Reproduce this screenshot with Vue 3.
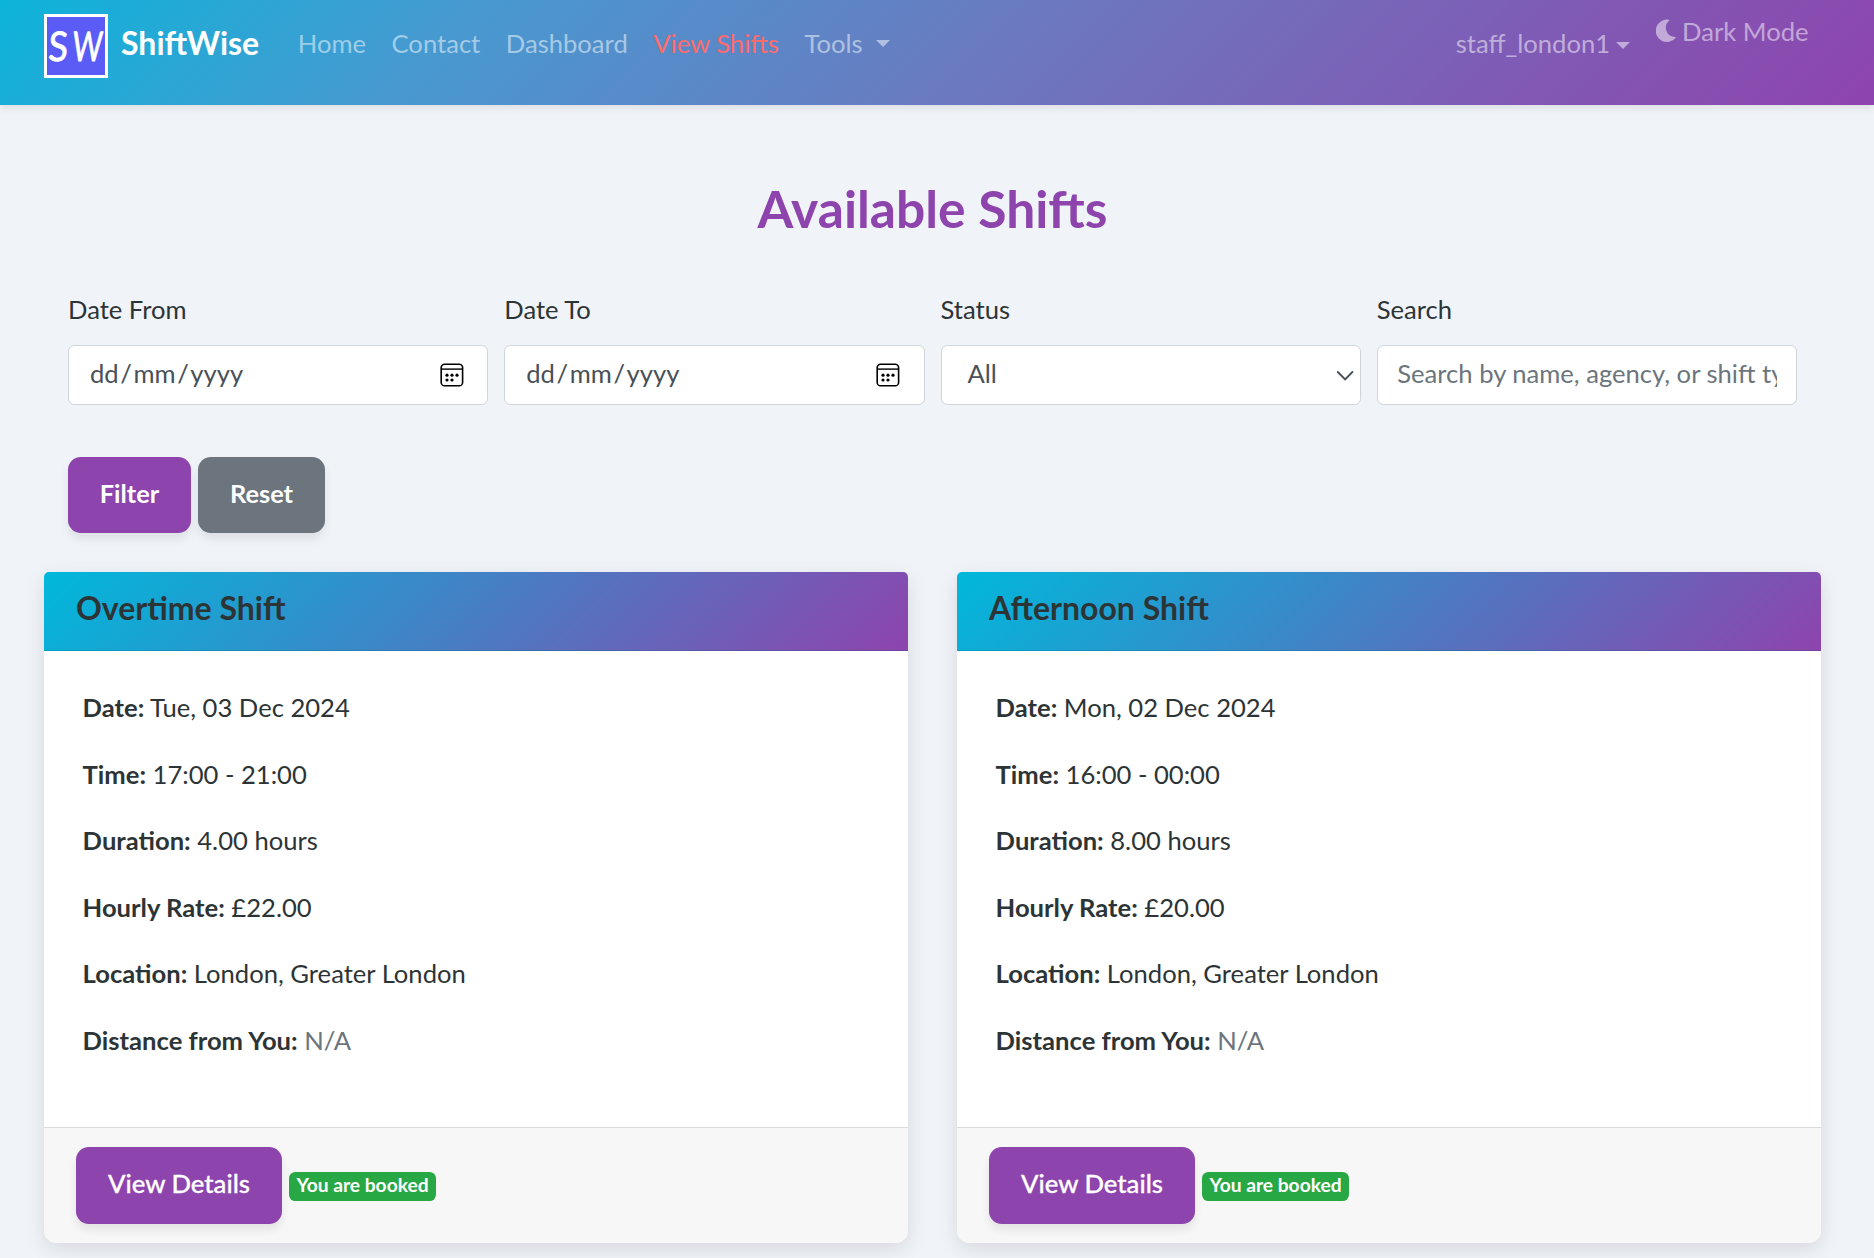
<script setup>
const links = [
  { label: 'Home' },
  { label: 'Contact' },
  { label: 'Dashboard' },
  { label: 'View Shifts', active: true },
  { label: 'Tools', caret: true },
]

const shifts = [
  {
    title: 'Overtime Shift',
    rows: [
      ['Date:', 'Tue, 03 Dec 2024'],
      ['Time:', '17:00 - 21:00'],
      ['Duration:', '4.00 hours'],
      ['Hourly Rate:', '£22.00'],
      ['Location:', 'London, Greater London'],
      ['Distance from You:', 'N/A', true],
    ],
  },
  {
    title: 'Afternoon Shift',
    rows: [
      ['Date:', 'Mon, 02 Dec 2024'],
      ['Time:', '16:00 - 00:00'],
      ['Duration:', '8.00 hours'],
      ['Hourly Rate:', '£20.00'],
      ['Location:', 'London, Greater London'],
      ['Distance from You:', 'N/A', true],
    ],
  },
]
</script>

<template>
  <div class="page">
    <nav class="navbar">
      <svg class="logo" width="64" height="64" viewBox="0 0 64 64">
        <rect width="64" height="64" fill="#fff" />
        <rect x="3" y="3" width="58" height="58" fill="#5b5bf6" />
        <g fill="#fff" stroke="#fff" stroke-width="0.8" stroke-linejoin="round" font-family="Lato, sans-serif" font-size="41">
          <text transform="translate(3.8 47.2) skewX(-3) scale(.88 1)">S</text>
          <text transform="translate(27.6 47.2) skewX(-4) scale(.71 1)">W</text>
        </g>
      </svg>
      <span class="brand">ShiftWise</span>
      <ul class="links">
        <li v-for="l in links" :key="l.label" :class="{ active: l.active }">
          {{ l.label }}<i v-if="l.caret" class="caret"></i>
        </li>
      </ul>
      <div class="user">staff_london1<i class="caret"></i></div>
      <div class="mode">
        <svg width="20" height="24" viewBox="0 0 20 24">
          <path d="M12.8 .8A11.2 11.2 0 1 0 19.7 18.7c.4-.4 0-.9-.5-.8A9.3 9.3 0 0 1 12.9 1.7c.5-.3.4-.9-.1-.9z" fill="currentColor" />
        </svg>
        <span>Dark Mode</span>
      </div>
    </nav>

    <main>
      <h2>Available Shifts</h2>

      <form class="filters" @submit.prevent>
        <div v-for="name in ['Date From', 'Date To']" :key="name" class="field">
          <label>{{ name }}</label>
          <div class="control date">
            <span>dd</span><span class="slash">/</span><span>mm</span><span class="slash">/</span><span>yyyy</span>
            <svg class="calendar" width="24" height="24" viewBox="0 0 24 24">
              <rect x="1.2" y="1.2" width="21.4" height="21.6" rx="3.4" fill="none" stroke="#000" stroke-width="1.6" />
              <path d="M1 6.1h22" stroke="#000" stroke-width="1.4" />
              <g fill="#000">
                <circle cx="7" cy="12.2" r="1.6" /><circle cx="12" cy="12.2" r="1.6" /><circle cx="17" cy="12.2" r="1.6" />
                <circle cx="7" cy="17" r="1.6" /><circle cx="12" cy="17" r="1.6" />
              </g>
            </svg>
          </div>
        </div>
        <div class="field">
          <label>Status</label>
          <div class="control select">
            <span>All</span>
            <svg width="18" height="12" viewBox="0 0 18 12">
              <path d="M1.8 2l7.3 7.3L16.4 2" fill="none" stroke="#495057" stroke-width="1.9" stroke-linecap="round" />
            </svg>
          </div>
        </div>
        <div class="field">
          <label>Search</label>
          <input class="control search" type="text" placeholder="Search by name, agency, or shift type" />
        </div>
      </form>

      <div class="actions">
        <button class="btn filter">Filter</button>
        <button class="btn reset">Reset</button>
      </div>

      <section class="cards">
        <article v-for="s in shifts" :key="s.title" class="card">
          <header>{{ s.title }}</header>
          <div class="body">
            <p v-for="r in s.rows" :key="r[0]">
              <strong>{{ r[0] }}</strong> <span :class="{ muted: r[2] }">{{ r[1] }}</span>
            </p>
          </div>
          <footer>
            <button class="btn details">View Details</button>
            <span class="badge">You are booked</span>
          </footer>
        </article>
      </section>
    </main>
  </div>
</template>

<style>
body {
  margin: 0;
  background: #f0f3f8;
}
</style>

<style scoped>
* {
  box-sizing: border-box;
}
.page {
  height: 1258px;
  overflow: hidden;
  background: #f0f3f8;
  color: #2d3436;
  font-family: Lato, sans-serif;
  font-size: 25.6px;
  line-height: 41px;
}
.navbar {
  height: 105px;
  padding: 14px 65.5px 0 44px;
  display: flex;
  align-items: flex-start;
  background: linear-gradient(135deg, #0cb4da, #4899d0 24.5%, #6c78bf 54%, #8e44ad);
  box-shadow: 0 3px 8px rgba(0, 0, 0, 0.09);
  color: rgba(255, 255, 255, 0.5);
  white-space: nowrap;
}
.logo {
  flex: none;
}
.brand {
  margin: 8px 0 0 13px;
  width: 164px;
  color: #fff;
  font-size: 32px;
  font-weight: 700;
}
.links {
  display: flex;
  gap: 25.5px;
  margin: 8.5px 0 0 12.8px;
  padding: 0;
  list-style: none;
}
.active {
  color: #ff6b6b;
}
.caret {
  display: inline-block;
  margin-left: 13.5px;
  vertical-align: 6px;
  border: 7px solid transparent;
  border-top-color: currentColor;
  border-bottom: 0;
}
.user {
  margin: 8.5px 0 0 auto;
}
.user .caret {
  margin-left: 6.4px;
  vertical-align: 4px;
}
.mode {
  display: flex;
  margin: -3.5px 0 0 25.6px;
}
.mode svg {
  margin: 8px 6px 0 0;
}
main {
  padding: 0 53px 0 44px;
}
h2 {
  margin: 0;
  padding-top: 72px;
  height: 184px;
  text-align: center;
  color: #8e44ad;
  font-size: 51.6px;
  line-height: 62px;
  font-weight: 700;
}
.filters {
  display: grid;
  grid-template-columns: repeat(4, 1fr);
  gap: 16px;
  padding: 0 24px;
}
.field label {
  display: block;
  height: 56px;
}
.control {
  display: flex;
  width: 100%;
  height: 60px;
  border: 1px solid #ced4da;
  border-radius: 6.4px;
  background: #fff;
  color: #495057;
  padding: 7px 21px;
}
.slash {
  margin: 0 1.6px;
}
.calendar {
  margin: 10px 2.4px 0 auto;
}
.select {
  padding: 7px 6px 7px 26px;
}
.select svg {
  margin: 17px 0 0 auto;
}
.search {
  font: inherit;
  padding: 0 19px 4px 19.5px;
}
.search::placeholder {
  color: #6c757d;
  opacity: 1;
}
.actions {
  display: flex;
  gap: 7px;
  padding: 52px 24px 0;
  height: 167px;
}
.btn {
  height: 76px;
  padding: 0 0 4px;
  border: 0;
  border-radius: 12.8px;
  background: #8e44ad;
  color: #fff;
  font: 700 25.4px/41px Lato, sans-serif;
  box-shadow: 0 6px 10px rgba(0, 0, 0, 0.08);
}
.filter {
  width: 123px;
}
.reset {
  width: 127px;
  background: #6c757d;
}
.cards {
  display: grid;
  grid-template-columns: 1fr 1fr;
  gap: 49px;
}
.card {
  height: 671px;
  display: flex;
  flex-direction: column;
  background: #fff;
  border-radius: 5px 5px 12.8px 12.8px;
  box-shadow: 0 6px 20px rgba(0, 0, 0, 0.11);
}
header {
  height: 79px;
  padding: 17px 32px 0;
  border-bottom: 1px solid rgba(0, 0, 0, 0.125);
  border-radius: 5px 5px 0 0;
  background: linear-gradient(135deg, #00b8db, #8e44ad);
  font-size: 32px;
  line-height: 38px;
  font-weight: 700;
}
.body {
  flex: 1;
  padding: 36px 38.6px 0;
}
.body p {
  margin: 0 0 25.6px;
}
.muted {
  color: #6c757d;
}
footer {
  display: flex;
  height: 116px;
  padding: 19px 32px 0;
  border-top: 1px solid #d9dadb;
  border-radius: 0 0 12.8px 12.8px;
  background: #f7f7f7;
}
.details {
  width: 206px;
  height: 77px;
  padding-bottom: 5px;
  font-size: 25.7px;
  font-weight: 500;
  -webkit-text-stroke: 0.3px #fff;
}
.badge {
  margin: 25px 0 0 7px;
  width: 147px;
  height: 29px;
  border-radius: 6.4px;
  background: #28a745;
  color: #fff;
  text-align: center;
  font-size: 19.2px;
  line-height: 25px;
  font-weight: 700;
}
</style>
